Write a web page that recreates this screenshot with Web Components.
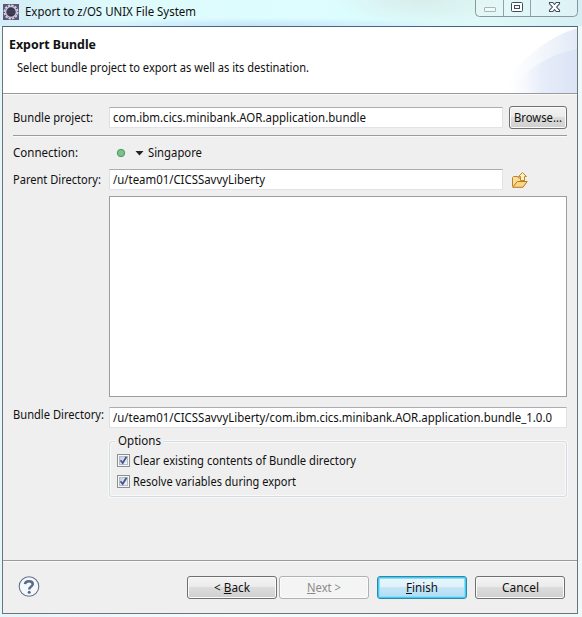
<!DOCTYPE html>
<html lang="en"><head><meta charset="utf-8"><title>Export to z/OS UNIX File System</title>
<style>html,body{margin:0;height:100%;overflow:hidden}body{font:12px/16px "Noto Sans","Open Sans",sans-serif;color:#111}</style></head>
<body><export-dialog></export-dialog>
<script>
const define=(name,html,setup)=>customElements.define(name,class extends HTMLElement{
  connectedCallback(){
    if(this.shadowRoot)return;
    const t=document.createElement('template');t.innerHTML=html;
    this.attachShadow({mode:'open'}).append(t.content.cloneNode(true));
    if(setup)setup.call(this,this.shadowRoot);
  }
});

// A single line of text condensed to the width given in the "w" attribute.
define('ui-text',`<style>:host{display:block;height:16px;line-height:16px;white-space:pre;flex:none}
span{display:inline-block;transform-origin:0 50%;white-space:pre}</style><span><slot></slot></span>`,function(r){
  const w=+this.getAttribute('w'),s=r.querySelector('span');
  this.style.width=w+'px';
  s.style.transform='scaleX('+(w/s.getBoundingClientRect().width)+')';
});

define('ui-field',`<style>:host{display:flex;align-items:center;box-sizing:border-box;height:21px;padding-left:3px;background:#fff;border:1px solid #e2e3ea;border-top-color:#abadb3;border-left-color:#dbdfe6;border-radius:1px}</style><slot></slot>`);

define('ui-button',`<style>:host{display:flex;align-items:center;justify-content:center;box-sizing:border-box;width:90px;height:23px;border:1px solid #707070;border-radius:3px;background:linear-gradient(#f3f3f3 0,#ebebeb 48%,#dcdcdc 50%,#cfcfcf 100%);box-shadow:inset 0 0 0 1px #fafafa}
:host([disabled]){border-color:#adb2b5;background:#f4f4f4;color:#8a8a8a;box-shadow:inset 0 0 0 1px #fbfbfb}
:host([primary]){border-color:#3585a6;background:linear-gradient(#eaf6fc 0,#dff1fb 48%,#c5e5f8 50%,#b2dcf2 100%);box-shadow:inset 0 0 0 1px #3acdf6,inset 0 0 0 2px #8fdcf7}</style><slot></slot>`);

define('ui-check',`<style>:host{display:flex;align-items:center;height:21px;gap:3px}svg{flex:none}</style>
<svg width="13" height="13" viewBox="0 0 13 13"><defs><linearGradient id="g" x2="1" y2="1"><stop stop-color="#c3cbda"/><stop offset="1" stop-color="#f6f7fa"/></linearGradient></defs>
<rect x=".5" y=".5" width="12" height="12" fill="#f7f7f7" stroke="#8a8f94"/><rect x="2.5" y="2.5" width="8" height="8" fill="url(#g)" stroke="#b4bbc8"/><path d="M3.5 6.3 5.7 9 9.5 2.8" fill="none" stroke="#445689" stroke-width="1.8"/></svg><slot></slot>`);

define('ui-group',`<style>:host{display:block;box-sizing:border-box;height:56px;border:1px solid #d3dce2;border-radius:3px;box-shadow:inset 0 0 0 1px #f9f9f9,0 0 0 1px #f8f8f8;padding:0 0 0 7px}
.l{width:49px;box-sizing:border-box;height:16px;margin:-9px 0 1px -2px;padding-left:3px;background:#efefef}</style><div class="l"><slot name="legend"></slot></div><slot></slot>`);

define('title-bar',`<style>:host{display:flex;height:26px;box-sizing:border-box;padding:0 4px 0 3px;background:radial-gradient(ellipse 210px 7px at 250px 25px,#c6e5fa,transparent),radial-gradient(ellipse 90px 24px at 420px 0,#d8edeb,transparent),linear-gradient(90deg,#d4edf6,#dffbfc 20%,#dcfdfe 60%,#def8f6 85%,#d6eff5)}
.i{width:16px;height:16px;margin:4px 6px 0 0}ui-text{margin-top:4px}.c{margin-left:auto}</style>
<svg class="i" viewBox="0 0 16 16"><rect width="16" height="16" fill="#5b547d"/><circle cx="8" cy="8" r="6.6" fill="#3c3751" stroke="#d5d3df" stroke-width="1.8" stroke-dasharray="2.4 1.056"/><circle cx="8" cy="8" r="5.4" fill="#37334b" stroke="#c8c5d4" stroke-width="1.5"/><path d="M4 6.5h8M3.700 8h8.600M4 9.500h8" stroke="#504b6b" stroke-width=".6"/></svg>
<ui-text w="171">Export to z/OS UNIX File System</ui-text>
<svg class="c" width="103" height="18" viewBox="0 0 103 18"><path d="M.5-2v14.500q0 4 4 4h94q4 0 4-4V-2" fill="#eefafa" fill-opacity=".35" stroke="#85999c"/><path d="M28.500 0v16M55.500 0v16" stroke="#8da5a6"/><rect x="9.500" y="7.500" width="11" height="4" rx=".5" fill="#effafa" stroke="#a7b7b9"/><rect x="36.500" y="2.500" width="11" height="9" rx="1" fill="#fff" stroke="#454b5d"/><rect x="39.500" y="5.500" width="5" height="3" fill="#dff" stroke="#454b5d"/><path d="M74.500 2.500h3.300l1.700 2 1.700-2h3.300v1.300L81.600 7l2.900 3.200v1.300h-3.300l-1.700-2-1.700 2h-3.300v-1.300L77.400 7l-2.900-3.200z" fill="#fff" stroke="#454b5d" stroke-width="1.100"/></svg>`);

define('wizard-header',`<style>:host{display:grid;grid-template-columns:1fr 100px;height:66px;background:#fff;border-bottom:1px solid #989a9e;box-shadow:0 1px #fafafa}
.t{padding:10px 0 0 6px}.t b{font-size:12.500px}.d{margin:7px 0 0 8px}svg{display:block}</style>
<div class="t"><b><ui-text w="87">Export Bundle</ui-text></b><ui-text class="d" w="292">Select bundle project to export as well as its destination.</ui-text></div>
<svg width="100" height="66" viewBox="0 0 100 66"><defs><linearGradient id="a" gradientUnits="userSpaceOnUse" x1="30" x2="100"><stop stop-color="#fff"/><stop offset=".4" stop-color="#f6f9fd"/><stop offset="1" stop-color="#e3eaf7"/></linearGradient><linearGradient id="b" gradientUnits="userSpaceOnUse" x1="30" x2="100"><stop stop-color="#fff" stop-opacity="0"/><stop offset=".5" stop-color="#e7edf9"/><stop offset="1" stop-color="#dbe4f5"/></linearGradient></defs><path d="M20 66Q53 16 100 1v65z" fill="url(#a)"/><path d="M30 66Q58 30 100 22v44z" fill="url(#b)"/></svg>`);

define('wizard-form',`<style>:host{display:block;flex:1;padding:12px 10px 0;box-sizing:border-box}
.r{display:grid;grid-template-columns:96px 394px 58px;align-items:center;height:23px}
.r ui-button{width:58px}.r.p{grid-template-columns:96px 394px 1fr;height:21px;margin-top:6px}
.r.w{grid-template-columns:96px 458px;height:21px;margin-top:10px}
.r.b{grid-template-columns:96px 394px 6px 58px}
.s{height:1px;margin-top:6px;background:#989a9c;box-shadow:0 1px #fafafa}
.n{display:flex;align-items:center;height:20px;margin-top:7px}.n ui-text:first-child{margin-right:38px}.n .v{margin-left:4px}
.dot{margin-right:9px}
.list{height:201px;margin:6px 0 0 96px;background:#fff;border:1px solid #9b9da1;box-sizing:border-box}
.f{margin-left:9px}
ui-group{margin:13px 0 0 96px}</style>
<div class="r b"><ui-text w="80">Bundle project:</ui-text><ui-field><ui-text w="253">com.ibm.cics.minibank.AOR.application.bundle</ui-text></ui-field><i></i><ui-button><ui-text w="48">Browse...</ui-text></ui-button></div>
<div class="s"></div>
<div class="n"><ui-text w="65">Connection:</ui-text><svg class="dot" width="10" height="10" viewBox="0 0 10 10"><circle cx="5" cy="5" r="3.700" fill="#7fbf8e" stroke="#4a9a60"/></svg><svg width="9" height="5" viewBox="0 0 9 5"><path d="M.5 0h8L4.500 4.500z" fill="#222"/></svg><ui-text class="v" w="54">Singapore</ui-text></div>
<div class="r p"><ui-text w="88">Parent Directory:</ui-text><ui-field><ui-text w="152">/u/team01/CICSSavvyLiberty</ui-text></ui-field>
<svg class="f" width="16" height="16" viewBox="0 0 16 16"><path d="M.5 14.500V5.500l1-1h4l1 1.500h4.500l1 1v2.500" fill="#f9dca0" stroke="#bd8124"/><path d="M.8 15.300 5.200 9.500h10L11 15.300z" fill="#fbd585" stroke="#b87a1c"/><path d="M8.500 8.500V4.500h-2l4-4 4 4h-2v4z" fill="#fff0bc" stroke="#c08628"/></svg></div>
<div class="list"></div>
<div class="r w"><ui-text style="margin-top:-5px" w="91">Bundle Directory:</ui-text><ui-field><ui-text w="439">/u/team01/CICSSavvyLiberty/com.ibm.cics.minibank.AOR.application.bundle_1.0.0</ui-text></ui-field></div>
<ui-group><ui-text slot="legend" w="43">Options</ui-text><ui-check><ui-text w="223">Clear existing contents of Bundle directory</ui-text></ui-check><ui-check><ui-text w="163">Resolve variables during export</ui-text></ui-check></ui-group>`);

define('wizard-footer',`<style>:host{display:flex;height:53px;box-sizing:border-box;border-top:1px solid #989a9c;box-shadow:inset 0 1px #fafafa;padding:15px 12px 0 15px}
svg{margin-right:auto}.g{margin-left:2px}.h{margin-left:8px}</style>
<svg width="22" height="22" viewBox="0 0 22 22"><circle cx="11" cy="10.500" r="9.800" fill="#f4f8fc" stroke="#65738a" stroke-width="1.100"/><path d="M7 8.200Q7.300 5.200 11 5.200T14.800 8.100C14.800 10.600 11.200 10.700 11.200 13.500" fill="none" stroke="#586a86" stroke-width="2.500"/><circle cx="11.200" cy="16.300" r="1.500" fill="#586a86"/></svg>
<ui-button><ui-text w="36">&lt; <u>B</u>ack</ui-text></ui-button><ui-button class="g" disabled><ui-text w="34"><u>N</u>ext &gt;</ui-text></ui-button><ui-button class="h" primary><ui-text w="32"><u>F</u>inish</ui-text></ui-button><ui-button class="h"><ui-text w="37">Cancel</ui-text></ui-button>`);

define('export-dialog',`<style>:host{display:block;width:582px;height:617px;background:linear-gradient(90deg,#e4f6fa,#f5fcfd 40%,#eef9fa)}
.c{display:flex;flex-direction:column;box-sizing:border-box;width:576px;height:588px;margin-left:2px;border:1px solid #6f747a;border-top-color:#486482;background:#efefef}</style>
<title-bar></title-bar><div class="c"><wizard-header></wizard-header><wizard-form></wizard-form><wizard-footer></wizard-footer></div>`);
</script></body></html>
